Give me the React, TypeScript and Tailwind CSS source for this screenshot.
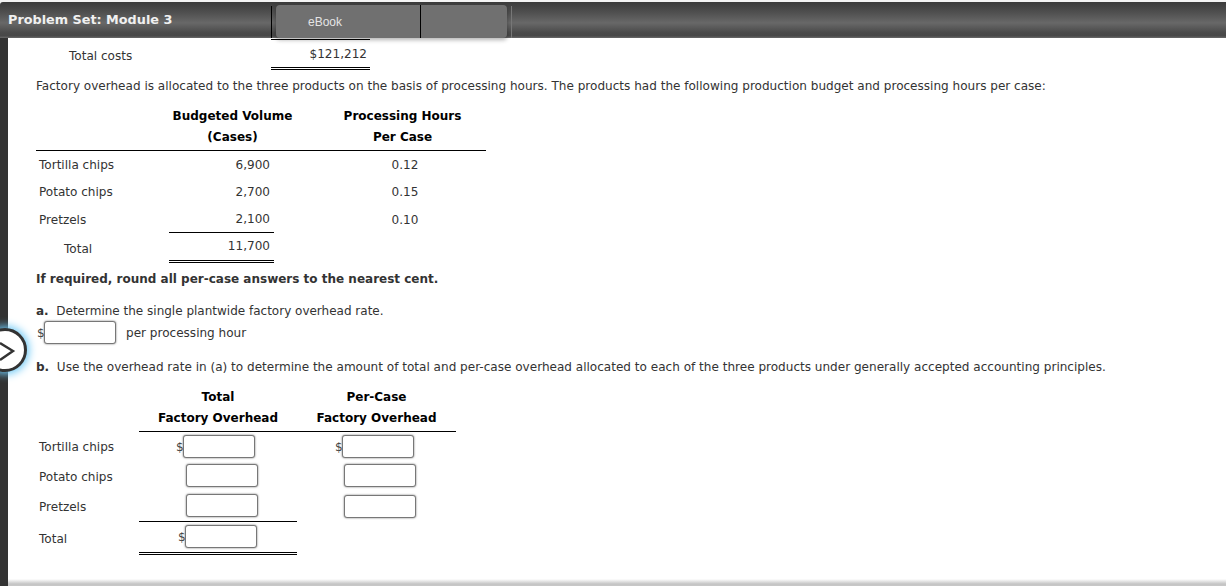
const font = { fontFamily: '"DejaVu Sans", sans-serif' };

function Field() {
  return (
    <input
      type="text"
      aria-label="answer"
      className="w-[72px] h-[23px] shrink-0 bg-white rounded-[3px] border border-[#777] shadow-[0_0_2px_#666]"
    />
  );
}

function Dollar() {
  return <span className="w-[7px] shrink-0 pt-px text-[#444]">$</span>;
}

function Head({ children, className }: { children: React.ReactNode; className: string }) {
  return <div className={`h-[21px] pt-[1px] flex items-center justify-center text-[12px] font-bold text-black ${className}`}>{children}</div>;
}

export default function App() {
  return (
    <div className="relative h-[586px] w-[1226px] overflow-hidden bg-white text-[12.05px] text-[#333]" style={font}>
      <div className="pt-[2px] bg-[#f4f4f4]">
        <div className="relative z-10 h-[36px] rounded-tl-[3px] flex items-start bg-[linear-gradient(to_bottom,#3b3b3b_0%,#505050_30%,#686868_58%,#4a4a4a_85%,#484848_94%,#6a6a6a_100%)]">
          <div className="w-[271px] h-full pl-2 flex items-center text-[12.8px] font-bold text-[#f0f0f0]">
            Problem Set: Module 3
          </div>
          <div className="mt-[4px] h-[32px] w-px bg-black" />
          <div className="ml-[4px] mt-[3px] w-[231px] h-[33px] flex rounded-[4px] bg-[#707070] shadow-[0_2px_4px_rgba(0,0,0,0.3)]">
            <div className="w-[145px] pl-[32px] pt-[1px] flex items-center border-r border-black text-[12px] text-[#e4e4e4] [font-family:'Liberation_Sans',sans-serif]">
              eBook
            </div>
          </div>
          <div className="ml-[4px] mt-[4px] h-[32px] w-px bg-[#777]" />
        </div>
      </div>

      <div className="flex h-[548px]">
        <div className="w-2 shrink-0 bg-[#333]" />
        <div className="flex-1 pl-[28px] pt-px bg-[linear-gradient(to_bottom,#ffffff_calc(100%-7px),#c4c4c4_calc(100%-2px),#c8c8c8_100%)]">
          <div className="flex">
            <div className="w-[235px] pl-[33px] pt-[3px] h-[31px] flex items-center">Total costs</div>
            <div className="w-[99px] h-[31px] pt-[1px] pr-[3px] flex items-center justify-end border-t border-b-[3px] border-b-black border-t-black border-double [border-top-style:solid]">
              $121,212
            </div>
          </div>

          <p className="mt-[6px] h-[20px] leading-[20px]">
            Factory overhead is allocated to the three products on the basis of processing hours. The products had the following production budget and processing hours per case:
          </p>

          <div className="mt-[9px] w-[450px]">
            <div className="border-b border-black pb-[3px]">
              <div className="flex">
                <div className="w-[133px]" />
                <Head className="w-[127px]">Budgeted Volume</Head>
                <Head className="ml-[23px] w-[167px]">Processing Hours</Head>
              </div>
              <div className="flex">
                <div className="w-[133px]" />
                <Head className="w-[127px]">(Cases)</Head>
                <Head className="ml-[23px] w-[167px]">Per Case</Head>
              </div>
            </div>
            <div className="flex h-[27px] pt-[1px] items-center">
              <div className="w-[133px] pl-[3px]">Tortilla chips</div>
              <div className="w-[105px] pr-[4px] text-right">6,900</div>
              <div className="ml-[78px] w-[106px] text-center">0.12</div>
            </div>
            <div className="flex h-[27px] pt-[1px] items-center">
              <div className="w-[133px] pl-[3px]">Potato chips</div>
              <div className="w-[105px] pr-[4px] text-right">2,700</div>
              <div className="ml-[78px] w-[106px] text-center">0.15</div>
            </div>
            <div className="flex h-[27px] pt-[1px] items-center">
              <div className="w-[133px] pl-[3px] pt-[2px]">Pretzels</div>
              <div className="w-[105px] pr-[4px] text-right">2,100</div>
              <div className="ml-[78px] w-[106px] pt-[2px] text-center">0.10</div>
            </div>
            <div className="flex">
              <div className="w-[133px] h-[31px] pl-[28px] pt-[3px] flex items-center">Total</div>
              <div className="w-[105px] h-[31px] pr-[4px] flex items-center justify-end border-t border-t-black border-b-[3px] border-b-black border-double [border-top-style:solid]">
                11,700
              </div>
            </div>
          </div>

          <p className="mt-[6px] h-[20px] leading-[20px] text-[12px] font-bold">If required, round all per-case answers to the nearest cent.</p>

          <p className="mt-[12px] h-[20px] leading-[20px] text-[12px]">
            <b>a.</b>&nbsp; Determine the single plantwide factory overhead rate.
          </p>
          <div className="flex items-center h-[23px] pl-px">
            <Dollar />
            <Field />
            <span className="ml-[10px] pt-[2px]">per processing hour</span>
          </div>

          <p className="mt-[13px] h-[20px] leading-[20px]">
            <b>b.</b>&nbsp; Use the overhead rate in (a) to determine the amount of total and per-case overhead allocated to each of the three products under generally accepted accounting principles.
          </p>

          <div className="mt-[9px] w-[420px]">
            <div className="ml-[103px] border-b border-black pb-[3px]">
              <div className="flex">
                <Head className="w-[158px]">Total</Head>
                <Head className="w-[159px]">Per-Case</Head>
              </div>
              <div className="flex">
                <Head className="w-[158px]">Factory Overhead</Head>
                <Head className="w-[159px]">Factory Overhead</Head>
              </div>
            </div>

            <div className="flex h-[30px] items-center">
              <div className="w-[103px] pl-[3px]">Tortilla chips</div>
              <div className="w-[158px] pl-[37px] pb-px flex items-center"><Dollar /><Field /></div>
              <div className="pl-[38px] pb-px flex items-center"><Dollar /><Field /></div>
            </div>
            <div className="flex h-[29px] items-center">
              <div className="w-[103px] pl-[3px] pt-[1px]">Potato chips</div>
              <div className="w-[158px] pl-[47px] pb-[2px] flex items-center"><Field /></div>
              <div className="pl-[47px] pb-[2px] flex items-center"><Field /></div>
            </div>
            <div className="flex h-[30px] items-center">
              <div className="w-[103px] pl-[3px] pt-[2px]">Pretzels</div>
              <div className="w-[158px] pl-[47px] pb-px flex items-center"><Field /></div>
              <div className="pl-[47px] pt-px flex items-center"><Field /></div>
            </div>
            <div className="flex">
              <div className="w-[103px] pl-[3px] pt-[2px] flex items-center">Total</div>
              <div className="w-[158px] h-[34px] pl-[39px] pb-px flex items-center border-t border-t-black border-b-[3px] border-b-black border-double [border-top-style:solid]">
                <Dollar /><Field />
              </div>
            </div>
          </div>
        </div>
      </div>

      <button
        aria-label="Open navigation"
        className="absolute left-[-17px] top-[328px] z-20 w-[44px] h-[44px] rounded-full bg-white border-[3px] border-[#333] shadow-[0_0_8px_2px_#6cc8f5] flex items-center justify-center"
      >
        <svg width="44" height="44" viewBox="0 0 44 44" className="shrink-0">
          <path d="M17 15 L30 23 L17 32" fill="none" stroke="#333" strokeWidth="2.4" />
        </svg>
      </button>
    </div>
  );
}
